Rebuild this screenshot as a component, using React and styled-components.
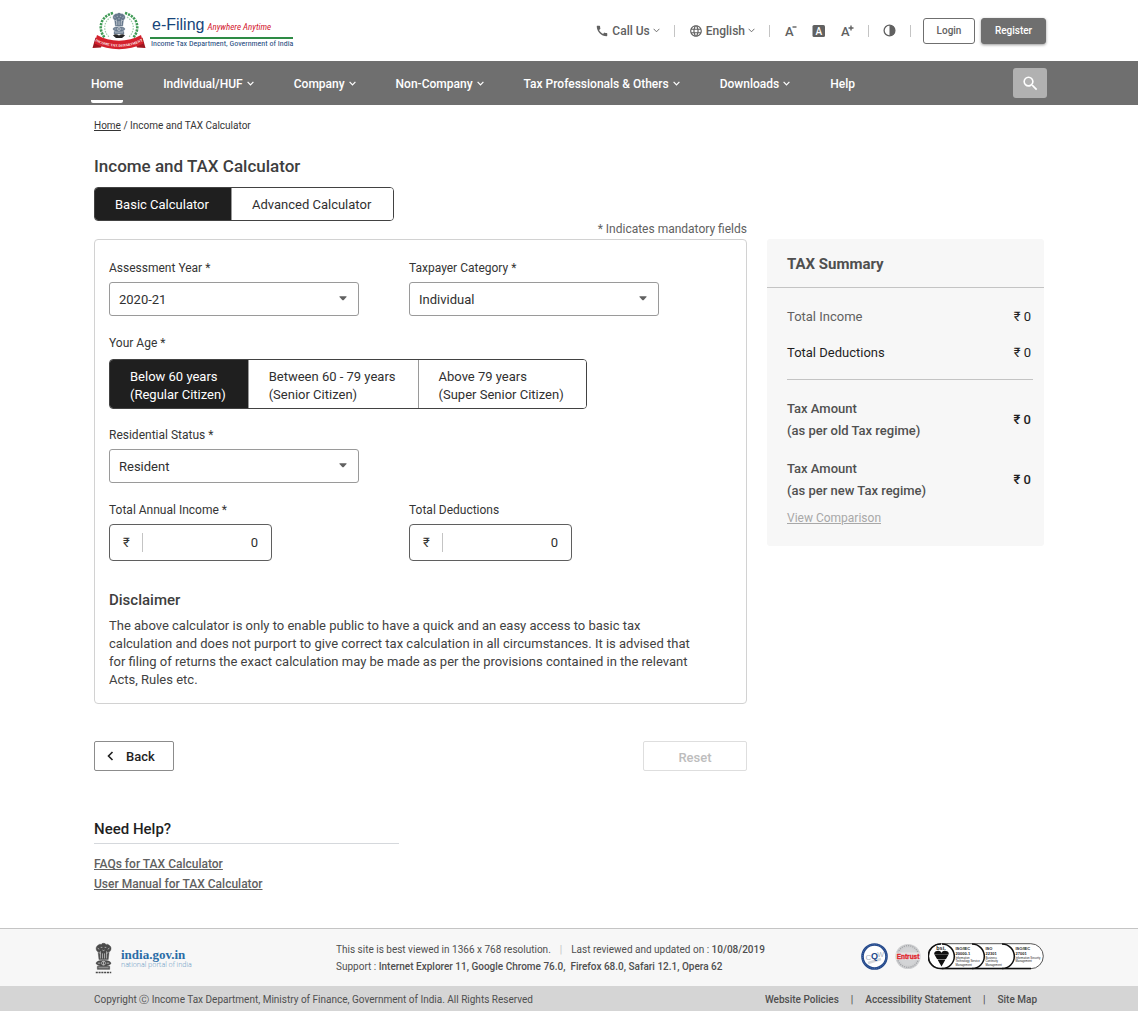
import React, { useState } from "react"
import styled, { createGlobalStyle, css } from "styled-components"
import { MdCall, MdLanguage, MdSearch } from "react-icons/md"

const GlobalStyle = createGlobalStyle`
  * {
    box-sizing: border-box;
  }
  body {
    margin: 0;
    background: #fff;
    color: #353535;
    font-family: Roboto, "Liberation Sans", sans-serif;
    font-size: 13px;
  }
  button, input, select {
    font-family: inherit;
  }
  h1, h2, p, ul {
    margin: 0;
    padding: 0;
  }
`

const Page = styled.div`
  display: flex;
  flex-direction: column;
  min-height: 100vh;
`

const Container = styled.div`
  width: 100%;
  max-width: ${({ $wide }) => ($wide ? "956px" : "950px")};
  margin: 0 auto;
`

/* ---------- header ---------- */

const HeaderBar = styled(Container)`
  display: flex;
  align-items: center;
  justify-content: space-between;
  height: 61px;
  padding: 0 1px;
`

const Brand = styled.a`
  display: flex;
  align-items: center;
  gap: 4px;
  color: #17457a;
  text-decoration: none;
`

const BrandName = styled.div`
  display: flex;
  align-items: baseline;
  gap: 3px;
  padding: 2px 18px 0 2px;
  border-bottom: 2px solid #2e8b45;
  font-family: "Liberation Sans", sans-serif;
  font-size: 16px;
  line-height: 19px;

  em {
    color: #d3202f;
    font-family: "Roboto Condensed", Roboto, sans-serif;
    font-size: 9px;
  }
`

const BrandSub = styled.div`
  padding-left: 1px;
  font-family: "Roboto Condensed", Roboto, sans-serif;
  font-size: 8px;
  line-height: 10px;
`

const Tools = styled.div`
  display: flex;
  align-items: center;
  color: #616161;
`

const ToolButton = styled.button`
  display: flex;
  align-items: center;
  gap: 3px;
  padding: 0;
  border: 0;
  background: none;
  color: inherit;
  font-size: 12px;
  font-weight: 500;
  cursor: pointer;
`

const Separator = styled.span`
  width: 1px;
  height: 12px;
  margin: 0 14px;
  background: #c4c4c4;
`

const SizeTools = styled.div`
  display: flex;
  gap: 14px;
`

const AuthButton = styled.button`
  height: 26px;
  min-width: ${({ $primary }) => ($primary ? "65px" : "52px")};
  margin-left: ${({ $primary }) => ($primary ? "6px" : "-2px")};
  padding: 0;
  border: 1px solid #6f6f6f;
  border-radius: 3px;
  background: ${({ $primary }) => ($primary ? "#6f6f6f" : "#fff")};
  box-shadow: ${({ $primary }) => ($primary ? "0 1px 3px rgba(0, 0, 0, 0.4)" : "none")};
  color: ${({ $primary }) => ($primary ? "#fff" : "#616161")};
  font-size: 10px;
  font-weight: 500;
`

/* ---------- navigation ---------- */

const NavBar = styled.nav`
  background: #6f6f6f;
`

const NavInner = styled(Container)`
  display: flex;
  align-items: center;
  justify-content: space-between;
  height: 44px;
`

const NavList = styled.ul`
  display: flex;
  gap: 40px;
  height: 44px;
  list-style: none;
`

const NavLink = styled.a`
  display: flex;
  align-items: center;
  gap: 4px;
  height: 42px;
  padding-top: 6px;
  border-bottom: 3px solid ${({ $active }) => ($active ? "#fff" : "transparent")};
  border-radius: 2px;
  color: #fff;
  font-size: 12px;
  font-weight: 500;
  text-decoration: none;
`

const SearchButton = styled.button`
  display: flex;
  align-items: center;
  justify-content: center;
  width: 34px;
  height: 30px;
  padding: 0;
  border: 0;
  border-radius: 3px;
  background: #b1b1b1;
  color: #fff;
`

/* ---------- calculator ---------- */

const Main = styled.main`
  flex: 1;
`

const Breadcrumb = styled.div`
  padding-top: 14px;
  font-size: 10px;
  line-height: 14px;

  a {
    color: inherit;
  }
`

const PageTitle = styled.h1`
  margin: 23px 0 11px;
  color: #3e3e3e;
  font-size: 17px;
  font-weight: 500;
  line-height: 20px;
`

const Segments = styled.div`
  display: inline-flex;
  border: 1px solid #424242;
  border-radius: 4px;
  overflow: hidden;
`

const Segment = styled.button`
  padding: ${({ $tall }) => ($tall ? "8px 22px 4px 20px" : "8px 22px 6px 20px")};
  border: 0;
  background: #fff;
  color: #303030;
  font-size: 13px;
  line-height: 18px;
  text-align: left;

  & + & {
    border-left: 1px solid #9a9a9a;
  }

  ${({ $selected }) =>
    $selected &&
    css`
      background: #1f1f1f;
      color: #fff;
    `}
`

const Columns = styled.div`
  display: grid;
  grid-template-columns: minmax(0, 1fr) 277px;
  column-gap: 20px;
  align-items: start;
`

const MandatoryNote = styled.p`
  padding-bottom: 2px;
  color: #616161;
  font-size: 12px;
  line-height: 16px;
  text-align: right;
  grid-column: 1;
`

const Card = styled.form`
  padding: 20px 14px 14px;
  border: 1px solid #d2d2d2;
  border-radius: 4px;
`

const FieldRow = styled.div`
  display: grid;
  grid-template-columns: repeat(auto-fill, 250px);
  column-gap: 50px;
  margin-bottom: 19px;
`

const Field = styled.div`
  display: flex;
  flex-direction: column;
  align-items: flex-start;
  gap: 6px;
`

const AgeField = styled(Field)`
  gap: 8px;
  margin-bottom: 18px;
`

const Label = styled.label`
  font-size: 12px;
  line-height: 16px;
`

const SelectBox = styled.div`
  position: relative;
  width: 100%;

  svg {
    position: absolute;
    top: 14px;
    right: 12px;
    pointer-events: none;
  }
`

const Select = styled.select`
  width: 100%;
  height: 34px;
  padding: 1px 30px 0 9px;
  border: 1px solid #9a9a9a;
  border-radius: 3px;
  appearance: none;
  background: #fff;
  color: #303030;
  font-size: 13px;
`

const AmountBox = styled.div`
  display: flex;
  align-items: center;
  width: 163px;
  height: 37px;
  padding: 0 13px;
  border: 1px solid #5f5f5f;
  border-radius: 4px;
  font-size: 13px;
`

const AmountInput = styled.input`
  width: 100%;
  min-width: 0;
  height: 19px;
  margin-left: 12px;
  padding: 0;
  border: 0;
  border-left: 1px solid #c4c4c4;
  color: #303030;
  font-size: 13px;
  text-align: right;
`

const Disclaimer = styled.section`
  padding: 10px 33px 0 0;

  h2 {
    margin-bottom: 7px;
    color: #3e3e3e;
    font-size: 15px;
    font-weight: 500;
    line-height: 20px;
  }
  p {
    color: #424242;
    line-height: 18px;
  }
`

const Actions = styled.div`
  display: flex;
  justify-content: space-between;
  margin-top: 37px;
  grid-column: 1;
`

const ActionButton = styled.button`
  display: flex;
  align-items: center;
  justify-content: center;
  gap: 12px;
  width: ${({ $wide }) => ($wide ? "104px" : "80px")};
  height: 30px;
  padding: 0 6px 0 0;
  border: 1px solid #8c8c8c;
  border-radius: 2px;
  background: #fff;
  color: #1f1f1f;
  font-size: 13px;
  font-weight: 500;

  &:disabled {
    padding: 2px 0 0;
    border-color: #dedede;
    color: #bdbdbd;
  }
`

/* ---------- summary ---------- */

const Summary = styled.aside`
  padding-bottom: 19px;
  border-radius: 3px;
  background: #f7f7f7;

  h2 {
    padding: 15px 20px 13px;
    border-bottom: 1px solid #c4c4c4;
    color: #4f4f4f;
    font-size: 15px;
    font-weight: 700;
    line-height: 20px;
  }
`

const SummaryGroup = styled.div`
  display: flex;
  flex-direction: column;
  gap: 16px;
  margin: 0 11px 0 20px;
  padding: ${({ $totals }) => ($totals ? "18px 0 7px" : "19px 0 16px")};
  border-bottom: ${({ $totals }) => ($totals ? "0" : "1px solid #c4c4c4")};
`

const SummaryRow = styled.div`
  display: flex;
  align-items: center;
  justify-content: space-between;
  padding-right: 2px;
  color: ${({ $dark, $strong }) => ($dark ? "#1f1f1f" : $strong ? "#505050" : "#616161")};
  font-size: 13px;
  font-weight: ${({ $strong }) => ($strong ? 500 : 400)};
  line-height: ${({ $strong }) => ($strong ? "22px" : "20px")};
`

const Amount = styled.span`
  color: #1f1f1f;
`

const CompareLink = styled.a`
  display: inline-block;
  margin-left: 20px;
  color: #a8a8a8;
  font-size: 12px;
  line-height: 18px;
`

/* ---------- help ---------- */

const Help = styled.section`
  width: 305px;
  margin: 48px 0 34px;

  h2 {
    margin-bottom: 10px;
    padding-bottom: 4px;
    border-bottom: 1px solid #d5d8dc;
    color: #1f1f1f;
    font-size: 15px;
    font-weight: 500;
    line-height: 20px;
  }
  a {
    display: block;
    color: #616161;
    font-size: 12px;
    font-weight: 500;
    line-height: 20px;
  }
`

/* ---------- footer ---------- */

const Footer = styled.footer`
  border-top: 1px solid #c4c4c4;
  background: #f7f7f7;
  color: #4f4f4f;
  font-size: 10px;
`

const FooterTop = styled(Container)`
  display: grid;
  grid-template-columns: 242px 1fr auto;
  align-items: center;
  height: 57px;
`

const PortalLink = styled.a`
  display: flex;
  align-items: center;
  gap: 8px;
  color: #2a6ca6;
  text-decoration: none;

  strong {
    display: block;
    padding-top: 2px;
    font-family: "Liberation Serif", serif;
    font-size: 13px;
    line-height: 13px;
  }
  small {
    display: block;
    color: #5c93c0;
    font-family: "Open Sans", sans-serif;
    font-size: 7px;
    font-weight: 300;
    line-height: 8px;
  }
`

const SiteInfo = styled.div`
  line-height: 17px;

  b {
    font-weight: 500;
  }
  i {
    margin: 0 9px;
    color: #c4c4c4;
    font-style: normal;
  }
`

const Badges = styled.div`
  display: flex;
  align-items: center;
  gap: 7px;
  padding-bottom: 2px;
`

const FooterBottom = styled.div`
  background: #d5d5d5;
`

const Legal = styled(Container)`
  display: flex;
  align-items: center;
  justify-content: space-between;
  height: 25px;
  padding: 2px 7px 0 0;
`

const LegalLinks = styled.div`
  display: flex;
  gap: 12px;
  font-weight: 500;

  a {
    color: inherit;
    text-decoration: none;
  }
`

/* ---------- drawings ---------- */

const Chevron = ({ thin }) => (
  <svg width="7" height="5" viewBox="0 0 7 5" fill="none" aria-hidden="true">
    <path d="M0.6 0.8 3.5 3.8 6.4 0.8" stroke="currentColor" strokeWidth={thin ? 0.9 : 1.2} />
  </svg>
)

const Caret = () => (
  <svg width="8" height="5" viewBox="0 0 8 5" aria-hidden="true">
    <path d="M0.500 0.300h7v.7L5 3.700q-1 1-2 0L0.500 1z" fill="#616161" />
  </svg>
)

const Contrast = () => (
  <svg width="13" height="13" viewBox="0 0 13 13" aria-hidden="true">
    <circle cx="6.500" cy="6.500" r="5.400" fill="none" stroke="#616161" strokeWidth="1.300" />
    <path d="M6.500 1v11a5.500 5.500 0 0 0 0-11z" fill="#616161" />
  </svg>
)

const LetterSize = ({ kind }) => (
  <svg width="14" height="20" viewBox="0 0 14 20" aria-hidden="true">
    {kind === "normal" && <rect x="0.500" y="4" width="12.500" height="12" rx="1.500" fill="#616161" />}
    <text
      x={kind === "normal" ? 3.4 : 1}
      y={kind === "normal" ? 13.5 : 14.5}
      fontFamily="Roboto, sans-serif"
      fontSize={kind === "normal" ? 10 : 13}
      fontWeight="500"
      fill={kind === "normal" ? "#fff" : "#616161"}
    >
      A
    </text>
    {kind === "smaller" && <path d="M8.500 6h4" stroke="#616161" strokeWidth="1.400" />}
    {kind === "larger" && <path d="M8.500 7h5M11 4.500v5" stroke="#616161" strokeWidth="1.400" />}
  </svg>
)

const Lions = ({ color }) => (
  <g fill={color} stroke={color}>
    <path d="M4 3c-2 1-2.600 3-1.800 5l1.600 2 .8 7h9l.8-7 1.600-2c.8-2 .2-4-1.800-5-1-1.200-2.200-1-2.700-.4C10.800 0.800 7.300 0.800 6.700 2.600 6 2 4.800 2 4 3z" strokeWidth="0.4" />
    <ellipse cx="9" cy="20.500" rx="7.200" ry="2.800" strokeWidth="0.4" />
    <path d="M3 23.500h12v3H3z" strokeWidth="0.4" />
    <g fill="none" stroke="#fff" strokeWidth="0.700" opacity="0.750">
      <path d="M6.300 5.200h1.600M10.100 5.200h1.600M8 7.800c.6.700 1.400.7 2 0M6 9v7M8 11v5M10 11v5M12 9v7M3.300 6l1.600 1M14.700 6l-1.600 1M4 9.500l2 2M14 9.500l-2 2" />
      <circle cx="9" cy="20.500" r="1.900" />
      <path d="M3.500 20.500h2.500M12 20.500h2.500M4 25h10M9 18.600v3.800" />
    </g>
  </g>
)

const DepartmentEmblem = () => (
  <svg width="54" height="40" viewBox="0 0 54 40" role="img" aria-label="Income Tax Department">
    <g fill="none" stroke="#3f9a55">
      <path d="M21 2C7 6 6 19 13 27M33 2c14 4 15 17 8 25" strokeWidth="2.600" strokeDasharray="2.200 1" />
      <path d="M19 6c-8 5-8 14-2 20M35 6c8 5 8 14 2 20" stroke="#9ccba7" strokeWidth="1.200" strokeDasharray="1.500 1.200" />
    </g>
    <g transform="translate(19.500 1) scale(0.830)">
      <Lions color="#66788c" />
    </g>
    <path d="M21 24.500c2-2 4-1 6 0 2-1 4-2 6 0l-3 2.500h-6z" fill="#262626" />
    <path d="M3.500 26.500 0.500 37l8.500-.5 1.500-4zM50.500 26.500l3 10.500-8.500-.5-1.500-4z" fill="#9e1620" />
    <path d="M5 24c13 7.500 31 7.500 44 0l2.500 8.500c-15 7.500-34 7.500-49 0z" fill="#d4202c" />
    <defs>
      <path id="ribbon" d="M3 30c15 7.600 33 7.600 48 0" />
    </defs>
    <text fontFamily="Liberation Serif, serif" fontSize="3.600" fontWeight="700" fill="#fff">
      <textPath href="#ribbon" startOffset="50%" textAnchor="middle">
        INCOME TAX DEPARTMENT
      </textPath>
    </text>
  </svg>
)

const StateEmblem = () => (
  <svg width="19" height="32" viewBox="0 0 18 31" aria-hidden="true">
    <Lions color="#4a4a4a" />
    <path d="M1.500 29.500h15" stroke="#4a4a4a" strokeWidth="1.400" strokeDasharray="2 0.700" />
  </svg>
)

const CqwBadge = () => (
  <svg width="27" height="27" viewBox="0 0 27 27" role="img" aria-label="CQW">
    <circle cx="13.500" cy="13.500" r="12" fill="#fff" stroke="#23488a" strokeWidth="2.600" />
    <circle cx="13.500" cy="13.500" r="12" fill="none" stroke="#5f80b8" strokeWidth="0.700" strokeDasharray="1 1" />
    <path d="M7 20l13-4" stroke="#d5d8dc" strokeWidth="2.500" />
    <g fontFamily="Liberation Sans, sans-serif" textAnchor="middle">
      <text x="7.500" y="16.500" fontSize="8" fill="#a9b1bc">C</text>
      <text x="13.500" y="15.500" fontSize="9" fontWeight="700" fill="#23488a">Q</text>
      <text x="19.500" y="14" fontSize="7" fill="#a9b1bc">W</text>
    </g>
  </svg>
)

const EntrustBadge = () => (
  <svg width="26" height="27" viewBox="0 0 26 27" role="img" aria-label="Entrust">
    <circle cx="13" cy="13.500" r="12.600" fill="#cfd0d2" />
    <circle cx="13" cy="13.500" r="10.800" fill="none" stroke="#a3a5a8" strokeWidth="1.300" strokeDasharray="1.200 1" />
    <circle cx="13" cy="13.500" r="8.800" fill="#d3d4d6" />
    <path d="M1 9.500h24v7.500H1z" fill="#e4e4e5" />
    <text x="13" y="15.800" textAnchor="middle" fontFamily="Liberation Sans, sans-serif" fontSize="6.500" fontWeight="700" fill="#e0262d" stroke="#e0262d" strokeWidth="0.300">
      Entrust
    </text>
  </svg>
)

const standards = [
  { x: 27.5, lines: ["ISO/IEC", "20000-1"], notes: ["Information", "Technology Service", "Management"] },
  { x: 57.5, lines: ["ISO", "22301"], notes: ["Business", "Continuity", "Management"] },
  { x: 87.5, lines: ["ISO/IEC", "27001"], notes: ["Information Security", "Management"] },
]

const BsiBadge = () => (
  <svg width="116" height="27" viewBox="0 0 116 27" role="img" aria-label="BSI certifications">
    <rect x="0.700" y="0.700" width="114.600" height="25" rx="12.500" fill="#fff" stroke="#444" strokeWidth="0.900" />
    <path d="M13 1h-.5a12.300 12.300 0 0 0 0 24.600H103" fill="none" stroke="#111" strokeWidth="1.500" />
    <g fill="none" stroke="#111" strokeWidth="1.500">
      <path d="M14 1a12.300 12.300 0 0 1 0 24.600M44 1a12.300 12.300 0 0 1 0 24.600M74 1a12.300 12.300 0 0 1 0 24.600" />
    </g>
    <path d="M13.500 23.500 9.500 16.500h8zM9 16l-2.300-4h13.600L18 16zM6.500 11.800a3.600 3 0 0 1 7-2 3.600 3 0 0 1 7 2z" fill="#111" />
    <g fontFamily="Liberation Sans, sans-serif" fill="#222">
      <text x="13" y="6.800" textAnchor="middle" fontSize="5.500" fontWeight="700">bsi.</text>
      {standards.map(({ x, lines, notes }) => (
        <g key={x}>
          {lines.map((line, i) => (
            <text key={line} x={x} y={7 + i * 4.5} fontSize="4" fontWeight="700">{line}</text>
          ))}
          {notes.map((note, i) => (
            <text key={note} x={x} y={15.5 + i * 3.5} fontSize="2.800">{note}</text>
          ))}
        </g>
      ))}
    </g>
  </svg>
)

/* ---------- page ---------- */

const menu = [
  { label: "Home", active: true },
  { label: "Individual/HUF", more: true },
  { label: "Company", more: true },
  { label: "Non-Company", more: true },
  { label: "Tax Professionals & Others", more: true },
  { label: "Downloads", more: true },
  { label: "Help" },
]

const ages = [
  ["Below 60 years", "(Regular Citizen)"],
  ["Between 60 - 79 years", "(Senior Citizen)"],
  ["Above 79 years", "(Super Senior Citizen)"],
]

const Header = () => (
  <header>
    <HeaderBar $wide>
      <Brand href="#home">
        <DepartmentEmblem />
        <div>
          <BrandName>
            e-Filing <em>Anywhere Anytime</em>
          </BrandName>
          <BrandSub>Income Tax Department, Government of India</BrandSub>
        </div>
      </Brand>
      <Tools>
        <ToolButton>
          <MdCall size={14} /> Call Us <Chevron thin />
        </ToolButton>
        <Separator />
        <ToolButton>
          <MdLanguage size={14} /> English <Chevron thin />
        </ToolButton>
        <Separator />
        <SizeTools>
          <ToolButton aria-label="Smaller text">
            <LetterSize kind="smaller" />
          </ToolButton>
          <ToolButton aria-label="Normal text">
            <LetterSize kind="normal" />
          </ToolButton>
          <ToolButton aria-label="Larger text">
            <LetterSize kind="larger" />
          </ToolButton>
        </SizeTools>
        <Separator />
        <ToolButton aria-label="Contrast">
          <Contrast />
        </ToolButton>
        <Separator />
        <AuthButton>Login</AuthButton>
        <AuthButton $primary>Register</AuthButton>
      </Tools>
    </HeaderBar>
    <NavBar>
      <NavInner $wide>
        <NavList>
          {menu.map(({ label, active, more }) => (
            <li key={label}>
              <NavLink href="#menu" $active={active}>
                {label} {more && <Chevron />}
              </NavLink>
            </li>
          ))}
        </NavList>
        <SearchButton aria-label="Search">
          <MdSearch size={19} />
        </SearchButton>
      </NavInner>
    </NavBar>
  </header>
)

const SelectField = ({ id, label, options }) => (
  <Field>
    <Label htmlFor={id}>{label}</Label>
    <SelectBox>
      <Select id={id}>
        {options.map(option => (
          <option key={option}>{option}</option>
        ))}
      </Select>
      <Caret />
    </SelectBox>
  </Field>
)

const AmountField = ({ id, label, value, onChange }) => (
  <Field>
    <Label htmlFor={id}>{label}</Label>
    <AmountBox>
      ₹
      <AmountInput id={id} inputMode="numeric" value={value} onChange={e => onChange(e.target.value)} />
    </AmountBox>
  </Field>
)

const TaxSummary = ({ income, deductions }) => (
  <Summary>
    <h2>TAX Summary</h2>
    <SummaryGroup>
      <SummaryRow>
        Total Income <Amount>₹ {income}</Amount>
      </SummaryRow>
      <SummaryRow $dark>
        Total Deductions <Amount>₹ {deductions}</Amount>
      </SummaryRow>
    </SummaryGroup>
    <SummaryGroup $totals>
      {["old", "new"].map(regime => (
        <SummaryRow key={regime} $strong>
          <span>
            Tax Amount
            <br />
            (as per {regime} Tax regime)
          </span>
          <Amount>₹ 0</Amount>
        </SummaryRow>
      ))}
    </SummaryGroup>
    <CompareLink href="#comparison">View Comparison</CompareLink>
  </Summary>
)

const PageFooter = () => (
  <Footer>
    <FooterTop>
      <PortalLink href="#portal">
        <StateEmblem />
        <span>
          <strong>india.gov.in</strong>
          <small>national portal of india</small>
        </span>
      </PortalLink>
      <SiteInfo>
        <div>
          This site is best viewed in 1366 x 768 resolution.<i>|</i>Last reviewed and updated on : <b>10/08/2019</b>
        </div>
        <div>
          Support : <b>Internet Explorer 11, Google Chrome 76.0,&nbsp; Firefox 68.0, Safari 12.1, Opera 62</b>
        </div>
      </SiteInfo>
      <Badges>
        <CqwBadge />
        <EntrustBadge />
        <BsiBadge />
      </Badges>
    </FooterTop>
    <FooterBottom>
      <Legal>
        <span>Copyright Ⓒ Income Tax Department, Ministry of Finance, Government of India. All Rights Reserved</span>
        <LegalLinks>
          <a href="#policies">Website Policies</a>
          <span>|</span>
          <a href="#accessibility">Accessibility Statement</a>
          <span>|</span>
          <a href="#sitemap">Site Map</a>
        </LegalLinks>
      </Legal>
    </FooterBottom>
  </Footer>
)

const App = () => {
  const [mode, setMode] = useState("Basic Calculator")
  const [age, setAge] = useState(0)
  const [income, setIncome] = useState("0")
  const [deductions, setDeductions] = useState("0")

  return (
    <Page>
      <GlobalStyle />
      <Header />
      <Main>
        <Container>
          <Breadcrumb>
            <a href="#home">Home</a> / Income and TAX Calculator
          </Breadcrumb>
          <PageTitle>Income and TAX Calculator</PageTitle>
          <Segments>
            {["Basic Calculator", "Advanced Calculator"].map(name => (
              <Segment key={name} $selected={mode === name} aria-pressed={mode === name} onClick={() => setMode(name)}>
                {name}
              </Segment>
            ))}
          </Segments>
          <Columns>
            <MandatoryNote>* Indicates mandatory fields</MandatoryNote>
            <span />
            <Card onSubmit={e => e.preventDefault()}>
              <FieldRow>
                <SelectField id="year" label="Assessment Year *" options={["2020-21", "2019-20"]} />
                <SelectField id="category" label="Taxpayer Category *" options={["Individual", "HUF"]} />
              </FieldRow>
              <AgeField>
                <Label as="span" id="age-label">
                  Your Age *
                </Label>
                <Segments role="group" aria-labelledby="age-label">
                  {ages.map(([range, citizen], i) => (
                    <Segment key={range} type="button" $tall $selected={age === i} aria-pressed={age === i} onClick={() => setAge(i)}>
                      {range}
                      <br />
                      {citizen}
                    </Segment>
                  ))}
                </Segments>
              </AgeField>
              <FieldRow>
                <SelectField id="status" label="Residential Status *" options={["Resident", "Non Resident"]} />
              </FieldRow>
              <FieldRow>
                <AmountField id="income" label="Total Annual Income *" value={income} onChange={setIncome} />
                <AmountField id="deductions" label="Total Deductions" value={deductions} onChange={setDeductions} />
              </FieldRow>
              <Disclaimer>
                <h2>Disclaimer</h2>
                <p>
                  The above calculator is only to enable public to have a quick and an easy access to basic tax
                  calculation and does not purport to give correct tax calculation in all circumstances. It is advised
                  that for filing of returns the exact calculation may be made as per the provisions contained in the
                  relevant Acts, Rules etc.
                </p>
              </Disclaimer>
            </Card>
            <TaxSummary income={income} deductions={deductions} />
            <Actions>
              <ActionButton>
                <svg width="7" height="10" viewBox="0 0 7 10" fill="none" aria-hidden="true">
                  <path d="M5.500 1 1.500 5l4 4" stroke="currentColor" strokeWidth="1.600" />
                </svg>
                Back
              </ActionButton>
              <ActionButton $wide disabled>
                Reset
              </ActionButton>
            </Actions>
          </Columns>
          <Help>
            <h2>Need Help?</h2>
            <a href="#faqs">FAQs for TAX Calculator</a>
            <a href="#manual">User Manual for TAX Calculator</a>
          </Help>
        </Container>
      </Main>
      <PageFooter />
    </Page>
  )
}

export default App
